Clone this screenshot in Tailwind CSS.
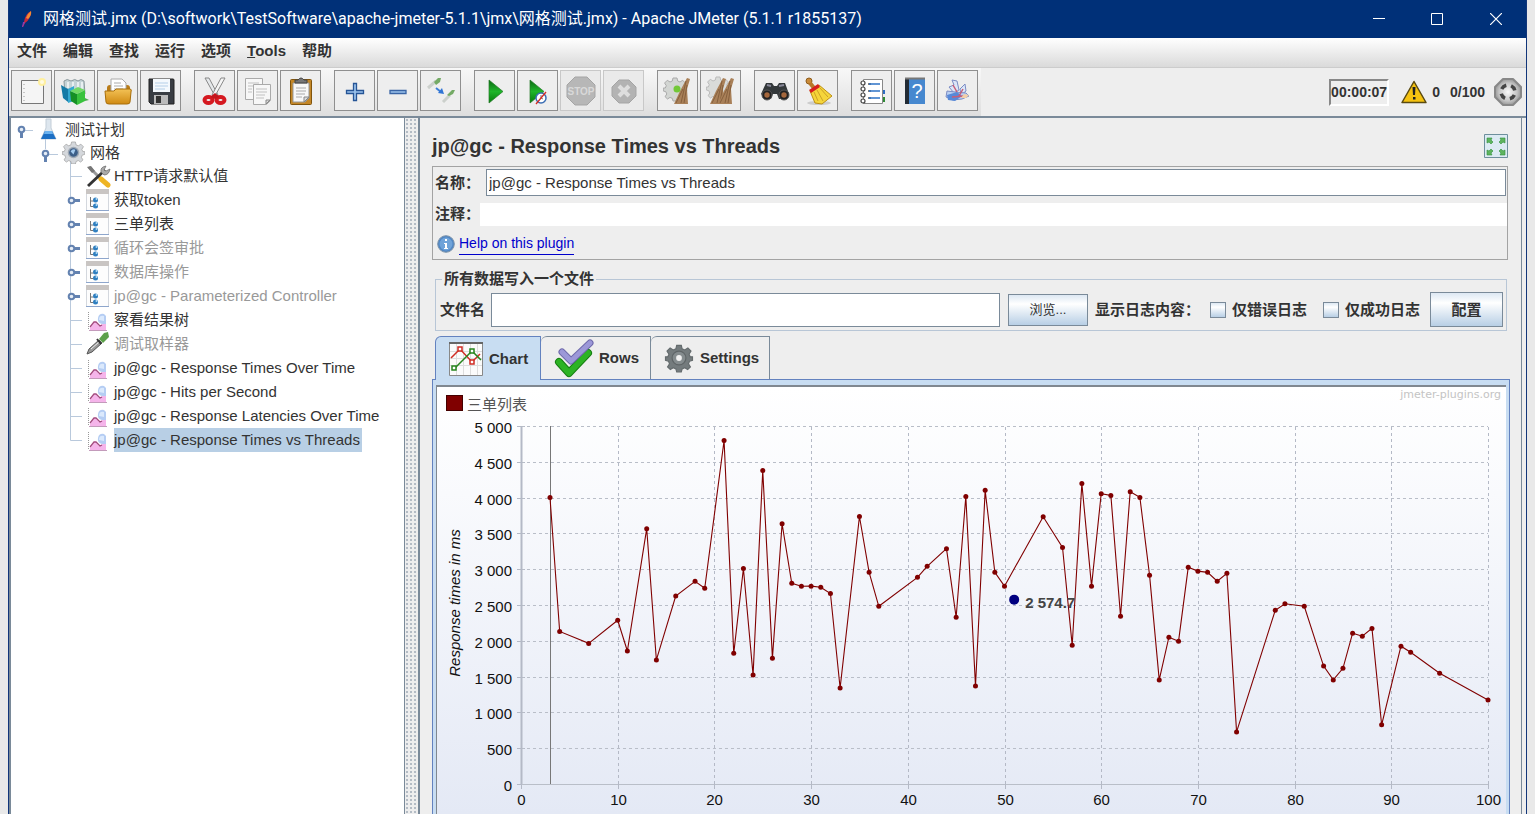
<!DOCTYPE html>
<html lang="zh-CN">
<head>
    <meta charset="UTF-8">
    <meta name="viewport" content="width=device-width, initial-scale=1.0">
    <title>网格测试.jmx - Apache JMeter (5.1.1 r1855137)</title>
    <script src="https://cdn.jsdelivr.net/npm/@tailwindcss/browser@4"></script>
</head>
<body class="h-screen overflow-hidden bg-[#e9e9e9] px-2 font-['Liberation_Sans','Noto_Sans_CJK_SC',sans-serif] text-[15px] leading-6 text-[#333]">

    <!-- Shared icons -->
    <svg class="absolute size-0" aria-hidden="true">
        <defs>
            <linearGradient id="gGreen" x1="0" y1="0" x2="0" y2="1"><stop offset="0" stop-color="#0a6a12"/><stop offset=".5" stop-color="#1fb52a"/><stop offset="1" stop-color="#067a0c"/></linearGradient>
            <linearGradient id="gChart" x1="0" y1="0" x2="0" y2="1"><stop offset="0" stop-color="#fff"/><stop offset=".25" stop-color="#f9fafd"/><stop offset="1" stop-color="#e4e9f5"/></linearGradient>
            <radialGradient id="gSteel"><stop offset="0" stop-color="#fafafa"/><stop offset=".7" stop-color="#c4c4c4"/><stop offset="1" stop-color="#999"/></radialGradient>
            <linearGradient id="gFolder" x1="0" y1="0" x2="0" y2="1"><stop offset="0" stop-color="#f3c256"/><stop offset="1" stop-color="#d08a12"/></linearGradient>
            <symbol id="keyDown" viewBox="0 0 9 14"><circle cx="4.500" cy="4.500" r="2.800" fill="#e6edf6" stroke="#6382b0" stroke-width="2"/><path d="M4.500 7v6" stroke="#6382b0" stroke-width="3"/></symbol>
            <symbol id="keyRight" viewBox="0 0 14 9"><circle cx="4.500" cy="4.500" r="2.800" fill="#e6edf6" stroke="#6382b0" stroke-width="2"/><path d="M7 4.500h6" stroke="#6382b0" stroke-width="3"/></symbol>
            <symbol id="controller" viewBox="0 0 24 24">
                <path d="M.5 1.500h22v21H.5z" fill="#fdfdfd" stroke="#d4d8de"/><path d="M0 1h23v5H0z" fill="#c9c5c3"/><path d="M0 22.500h23" stroke="#8ea6cc"/>
                <path d="M4.500 9v9.500h3M4.500 13h3" fill="none" stroke="#777"/><circle cx="9.500" cy="12" r="2.500" fill="#2f7fc0"/><circle cx="9.500" cy="18" r="2.500" fill="#2f7fc0"/><circle cx="10.500" cy="11" r="1" fill="#b5dcf5"/><circle cx="10.500" cy="17" r="1" fill="#b5dcf5"/>
            </symbol>
            <symbol id="listener" viewBox="0 0 24 24">
                <path d="M2.500 2v18" stroke="#999" stroke-dasharray="1 1"/><path d="M4 18l5-6 4 4 7-4v9H4z" fill="#f5b4ea"/><path d="M4 17l4-5 2 0 4 4 2-1" fill="none" stroke="#a3487e" stroke-width="1.300"/>
                <path d="M12 8q1-5 6-4l2 2v8h-4q-5-1-4-6z" fill="#b5cdf3"/><path d="M13 10q0-5 5-4v5" fill="#dbe9fc"/><path d="M3 20.500h18" stroke="#c39bbb"/>
            </symbol>
            <symbol id="gear" viewBox="-12 -12 24 24">
                <g fill="#d5d8dc" stroke="#9a9a9a" stroke-width=".7"><path id="cog" d="M-2-11h4l.7 3 2.300 1 2.700-1.700 2.700 2.700L8.700-3.300l1 2.300 2 0v3l-2.500.7-1 2.300L9.900 7.700 7.500 10 5 8.400l-2.300 1L2 12h-4l-.7-2.600L-5 8.400-7.500 10-9.900 7.700-8.200 5l-1-2.300-2.500-.7v-3l2 0 1-2.300L-10.400-6l2.700-2.700L-5-7l2.300-1z"/></g>
                <circle r="6" fill="#9fa9b5"/><circle r="4.500" fill="#3d5f88"/><path d="M-3-1a4 4 0 0 1 5-2L0 2z" fill="#a5cbee"/>
            </symbol>
            <symbol id="broom" viewBox="0 0 30 30"><path d="M26 2l3 1-3 10 1 15H13l6-13z" fill="#a98058"/><path d="M25 5l-5 22M26 9l-3 18M22 13l-7 14" stroke="#7c5735" stroke-width=".8"/></symbol>
        </defs>
    </svg>

    <div class="flex h-full flex-col border-x border-[#12367a] bg-[#eee]">
        <!-- Title bar -->
        <header class="flex h-[38px] shrink-0 items-center bg-[#003078] pl-3 text-white">
            <svg class="h-[18px] w-3" viewBox="0 0 12 18"><path d="M10 1q-6 3-7 11l-2 5 1 0 2-4Q10 9 10 1z" fill="#c72a3b"/><path d="M10 1q-4 3-5 7l2 1Q11 5 10 1z" fill="#f38a32"/><path d="M2 12l2 0-2 5H1z" fill="#8c3bb0"/></svg>
            <h1 class="ml-[10px] flex-1 font-['Roboto','Noto_Sans_CJK_SC',sans-serif] text-[16px] whitespace-nowrap">网格测试.jmx (D:\softwork\TestSoftware\apache-jmeter-5.1.1\jmx\网格测试.jmx) - Apache JMeter (5.1.1 r1855137)</h1>
            <button aria-label="最小化" class="flex w-[58px] justify-center"><svg class="size-3" viewBox="0 0 12 12"><path d="M0 5.500h12" stroke="#fff"/></svg></button>
            <button aria-label="最大化" class="flex w-[58px] justify-center"><svg class="size-3" viewBox="0 0 12 12"><path d="M.5.5h11v11H.5z" fill="none" stroke="#fff"/></svg></button>
            <button aria-label="关闭" class="flex w-[60px] justify-center"><svg class="size-3" viewBox="0 0 12 12"><path d="M0 0l12 12M12 0L0 12" stroke="#fff" stroke-width="1.200"/></svg></button>
        </header>

        <!-- Menu -->
        <nav class="flex h-[30px] shrink-0 items-center gap-4 border-b border-[#ccc] bg-linear-to-b from-white to-[#dadada] pb-1 pl-2 font-bold">
            <button>文件</button>
            <button>编辑</button>
            <button>查找</button>
            <button>运行</button>
            <button>选项</button>
            <button><u>T</u>ools</button>
            <button>帮助</button>
        </nav>

        <!-- Toolbar -->
        <div class="flex h-[50px] shrink-0 items-center justify-between border-b-2 border-[#7a8a99]">
            <div class="flex h-full items-start gap-[13px] bg-linear-to-b from-[#f8f8f8] to-[#dedede] pt-[2px] pr-[3px] pl-[2px]">
                <div class="flex gap-[2px]">
                    <button aria-label="新建" class="flex size-[41px] items-center justify-center border border-[#8f8f8f] bg-[#eee]">
                        <svg class="size-[30px]" viewBox="0 0 30 30"><path d="M4.500 4.500h22v23h-22z" fill="#f5f5f5" stroke="#777"/><path d="M7 8v17" stroke="#999" stroke-dasharray="1 3"/><circle cx="25" cy="6" r="4" fill="#fff0a0"/><circle cx="25" cy="6" r="2" fill="#fffbe0"/></svg>
                    </button>
                    <button aria-label="模板" class="flex size-[41px] items-center justify-center border border-[#8f8f8f] bg-[#eee]">
                        <svg class="size-[30px]" viewBox="0 0 30 30"><path d="M4 5q3-3 7 0 4-3 7 0 3-3 6 0l1 13H5z" fill="#c4d3d6" stroke="#8b999d"/><path d="M8 6v6M13 6v7M18 6v7M22 6v7" stroke="#f5f9fa" stroke-width="1.500"/><path d="M1 9l7 4v13l-5-4z" fill="#147aa6"/><path d="M8 13l6-3v15l-6 2z" fill="#35a8cf"/><path d="M10 15l7 3v11l-6-4z" fill="#169025"/><path d="M17 18l8-4v11l-8 4z" fill="#39c33d"/><path d="M10 15l8-4 7 3-8 4z" fill="#71da64"/><path d="M25 22l4 2-4 1z" fill="#4fa952"/></svg>
                    </button>
                    <button aria-label="打开" class="flex size-[41px] items-center justify-center border border-[#8f8f8f] bg-[#eee]">
                        <svg class="size-[30px]" viewBox="0 0 30 30"><path d="M4 12q0-3 3-3h17q3 0 3 3v12H4z" fill="#b97c18"/><path d="M8 3h11l4 4v12H8z" fill="#fff" stroke="#aaa"/><path d="M11 7h7M11 10h9M11 13h9" stroke="#aaa"/><path d="M2 15h9l2-2h14q2 0 1 3l-1 10q0 2-3 2H6q-3 0-3-2z" fill="url(#gFolder)" stroke="#a86e0b"/></svg>
                    </button>
                    <button aria-label="保存" class="flex size-[41px] items-center justify-center border border-[#8f8f8f] bg-[#eee]">
                        <svg class="size-[30px]" viewBox="0 0 30 30"><path d="M3 3h24q1 0 1 1v24H5l-2-2z" fill="#393d43" stroke="#222"/><path d="M7 3h17v13H7z" fill="#f4f9fd"/><path d="M9 7h13M9 10h13M9 13h10" stroke="#b4cfe8"/><path d="M8 19h14v9H8z" fill="#bbb"/><path d="M10 20h5v7h-5z" fill="#333"/></svg>
                    </button>
                </div>
                <div class="flex gap-[2px]">
                    <button aria-label="剪切" class="flex size-[41px] items-center justify-center border border-[#8f8f8f] bg-[#eee]">
                        <svg class="size-[30px]" viewBox="0 0 30 30"><path d="M5 2l4 0 9 17-3 1z" fill="#e5e8ea" stroke="#888"/><path d="M25 2l-4 0-9 17 3 1z" fill="#f5f5f5" stroke="#888"/><g fill="#eee" stroke="#d51920" stroke-width="4"><ellipse cx="8.500" cy="24" rx="4" ry="3"/><ellipse cx="20.500" cy="24" rx="4" ry="3"/></g><path d="M10 21l5-4 5 4-5 2z" fill="#c5151c"/></svg>
                    </button>
                    <button aria-label="复制" class="flex size-[41px] items-center justify-center border border-[#8f8f8f] bg-[#eee]">
                        <svg class="size-[30px]" viewBox="0 0 30 30"><g fill="#f7f7f7" stroke="#aaa"><path d="M2.500 2.500h17v21h-17z"/><path d="M10.500 8.500h17v16l-4 4h-13z"/></g><path d="M5 7h11M5 10h5M5 13h4M5 16h4M13 13h11M13 16h11M13 19h9M13 22h8" stroke="#c1c1c1"/><path d="M23 28v-4h4z" fill="#ddd" stroke="#888"/></svg>
                    </button>
                    <button aria-label="粘贴" class="flex size-[41px] items-center justify-center border border-[#8f8f8f] bg-[#eee]">
                        <svg class="size-[30px]" viewBox="0 0 30 30"><rect x="4.500" y="3.500" width="21" height="25" rx="1" fill="#c48727" stroke="#80540d"/><path d="M7 7h16v15l-4 4H7z" fill="#f8f8f8" stroke="#999"/><path d="M10 12h10M10 15h10M10 18h9M10 21h6" stroke="#aaa"/><path d="M9 7V4h3q3-4 6 0h3v3z" fill="#777" stroke="#444"/><path d="M18 26v-5h5z" fill="#ddd" stroke="#888"/></svg>
                    </button>
                </div>
                <div class="flex gap-[2px]">
                    <button aria-label="展开全部" class="flex size-[41px] items-center justify-center border border-[#8f8f8f] bg-[#eee]">
                        <svg class="size-[30px]" viewBox="0 0 30 30"><path d="M13.500 7.500h3v7h7v3h-7v7h-3v-7h-7v-3h7z" fill="#9cc3ec" stroke="#265596" stroke-width="1.300"/></svg>
                    </button>
                    <button aria-label="折叠全部" class="flex size-[41px] items-center justify-center border border-[#8f8f8f] bg-[#eee]">
                        <svg class="size-[30px]" viewBox="0 0 30 30"><path d="M7 14.500h16v3H7z" fill="#9cc3ec" stroke="#3a65a5" stroke-width="1.300"/></svg>
                    </button>
                    <button aria-label="切换" class="flex size-[41px] items-center justify-center border border-[#8f8f8f] bg-[#eee]">
                        <svg class="size-[30px]" viewBox="0 0 30 30"><path d="M2 12l8-7M17 26l7-7" stroke="#ccd0cc" stroke-width="3"/><path d="M8 6l4-4 3 0-1 4-4 3zM21 19l5-5 3 0-2 4-4 2z" fill="#74aa65"/><path d="M10 12l5 4" stroke="#3d7fd8" stroke-width="2"/><path d="M18 18l-6-1 4-5z" fill="#2f74d5"/></svg>
                    </button>
                </div>
                <div class="flex gap-[2px]">
                    <button aria-label="启动" class="flex size-[41px] items-center justify-center border border-[#8f8f8f] bg-[#eee]">
                        <svg class="size-[30px]" viewBox="0 0 30 30"><path d="M9 4l14 11.500L9 27z" fill="url(#gGreen)" stroke="#257a28" stroke-width=".7"/></svg>
                    </button>
                    <button aria-label="不停顿开始" class="flex size-[41px] items-center justify-center border border-[#8f8f8f] bg-[#eee]">
                        <svg class="size-[30px]" viewBox="0 0 30 30"><path d="M7 4l14 11.500L7 27z" fill="url(#gGreen)" stroke="#257a28" stroke-width=".7"/><circle cx="18" cy="22" r="5" fill="#fff" stroke="#3b6eb4" stroke-width="1.500"/><path d="M18 19v3l2 1" stroke="#777" fill="none"/><path d="M13 28l10-12" stroke="#d42b22" stroke-width="1.300"/></svg>
                    </button>
                    <button aria-label="停止" disabled class="flex size-[41px] items-center justify-center border border-[#c8c8c8] bg-[#eaeaea]">
                        <svg class="size-[30px]" viewBox="0 0 30 30"><path d="M9 1h12l8 8v12l-8 8H9l-8-8V9z" fill="#b7b7b7" stroke="#a5a5a5"/><text x="15" y="19" text-anchor="middle" font-size="10" font-weight="bold" fill="#d9d9d9">STOP</text></svg>
                    </button>
                    <button aria-label="关闭测试" disabled class="flex size-[41px] items-center justify-center border border-[#c8c8c8] bg-[#eaeaea]">
                        <svg class="size-[30px]" viewBox="0 0 30 30"><path d="M10 4h10l7 7v9l-7 7H10l-7-7v-9z" fill="#b3b3b3" stroke="#a5a5a5"/><path d="M10 10l10 10M20 10L10 20" stroke="#dedede" stroke-width="4"/></svg>
                    </button>
                </div>
                <div class="flex gap-[2px]">
                    <button aria-label="清除" class="flex size-[41px] items-center justify-center border border-[#8f8f8f] bg-[#eee]">
                        <svg class="size-[30px]" viewBox="0 0 30 30"><use href="#cog" transform="translate(12 13)" fill="#d2d5d2" stroke="#aaa"/><use href="#broom" x="-2" width="30" height="30"/><circle cx="14" cy="13" r="3.500" fill="#72c837"/></svg>
                    </button>
                    <button aria-label="清除全部" class="flex size-[41px] items-center justify-center border border-[#8f8f8f] bg-[#eee]">
                        <svg class="size-[30px]" viewBox="0 0 30 30"><use href="#cog" transform="translate(12 12)" fill="#d9dbd9" stroke="#bbb"/><use href="#broom" x="-9" width="30" height="30"/><use href="#broom" x="-1" width="30" height="30"/></svg>
                    </button>
                </div>
                <div class="flex gap-[2px]">
                    <button aria-label="搜索" class="flex size-[41px] items-center justify-center border border-[#8f8f8f] bg-[#eee]">
                        <svg class="size-[30px]" viewBox="0 0 30 30"><path d="M6 7h6l2 3h3l2-3h6l4 11-5 5h-5l-2-5h-4l-2 5H6l-5-5z" fill="#33383a"/><circle cx="7" cy="19" r="5" fill="#222" stroke="#555"/><circle cx="24" cy="19" r="5" fill="#222" stroke="#555"/><circle cx="7" cy="19" r="2.700" fill="#a5673c"/><circle cx="24" cy="19" r="2.700" fill="#a5673c"/><path d="M7 9l4 1M19 10l5-1" stroke="#889" stroke-width="2"/></svg>
                    </button>
                    <button aria-label="重置搜索" class="flex size-[41px] items-center justify-center border border-[#8f8f8f] bg-[#eee]">
                        <svg class="size-[30px]" viewBox="0 0 30 30"><ellipse cx="16" cy="27" rx="12" ry="2" fill="#ccc"/><circle cx="6" cy="5" r="3" fill="#c98b3a" stroke="#8f5d1c"/><path d="M7 7l4 5" stroke="#b87828" stroke-width="4"/><path d="M7 15l9-6 13 11-10 8-7-1z" fill="#f5d53a" stroke="#bd9015"/><path d="M11 16l4 9M14 14l6 11M17 12l8 9" stroke="#cda226"/><path d="M6 14l9-6 2 3-9 6z" fill="#d61e1e"/></svg>
                    </button>
                </div>
                <div class="flex gap-[2px]">
                    <button aria-label="函数助手" class="flex size-[41px] items-center justify-center border border-[#8f8f8f] bg-[#eee]">
                        <svg class="size-[30px]" viewBox="0 0 30 30"><path d="M24 14h4v4h-4z" fill="#2e6dc2"/><path d="M24 21h4v5h-4z" fill="#2f8b35"/><path d="M6.500 3.500h19v24h-19z" fill="#fff" stroke="#888"/><path d="M11 8h3M11 15h3M11 22h3" stroke="#555" stroke-width="1.500"/><path d="M12 8h11M12 15h11M12 22h11" stroke="#2e73c6" stroke-width="1.500"/><g fill="#fff" stroke="#444" stroke-width="1.200"><circle cx="6" cy="7" r="2"/><circle cx="6" cy="13" r="2"/><circle cx="6" cy="19" r="2"/><circle cx="6" cy="25" r="2"/></g></svg>
                    </button>
                    <button aria-label="帮助" class="flex size-[41px] items-center justify-center border border-[#8f8f8f] bg-[#eee]">
                        <svg class="size-[30px]" viewBox="0 0 30 30"><path d="M5 2h20v26H5z" fill="#4688cf"/><path d="M5 2h4v26H5z" fill="#222b35"/><path d="M5 2.500h20" stroke="#777" stroke-width="2"/><text x="17" y="22" text-anchor="middle" font-size="20" fill="#fff">?</text></svg>
                    </button>
                    <button aria-label="插件管理" class="flex size-[41px] items-center justify-center border border-[#8f8f8f] bg-[#eee]">
                        <svg class="size-[30px]" viewBox="0 0 30 30"><g fill="#dce6f8" stroke="#7b8cc4"><path d="M9 4l5 1 2 9-5 3-5-6 5-2z"/><path d="M17 13l5-5 1 7-5 4z"/><path d="M4 15l8 1 11 1 3 3-7 3-9 1-7-3z" fill="#b9cff2"/></g><path d="M4 19l10-3 5 4-7 5-7-1z" fill="#5789d8"/><path d="M10 9l4 7M20 13l-4 7M9 21l12-1" stroke="#c75d77" stroke-width="1.500"/><path d="M21 18l5 1-3 3-5 0z" fill="#f3cfa8"/></svg>
                    </button>
                </div>
            </div>
            <div class="flex items-center pr-1 font-bold">
                <output class="border-2 border-[#888] border-r-white border-b-white text-[14px] leading-[23px]">00:00:07</output>
                <svg class="ml-3 h-6 w-[26px]" viewBox="0 0 26 24"><path d="M13 1.500L25 22.500H1z" fill="#f5c211" stroke="#5a4a10" stroke-width="1.500" stroke-linejoin="round"/><path d="M11.500 7h3l-.5 8h-2zM12 17h2.500v2.500H12z" fill="#222"/></svg>
                <span class="ml-[5px] text-[14px]">0</span>
                <span class="ml-[10px] text-[14px]">0/100</span>
                <svg class="ml-[9px] size-7" viewBox="0 0 28 28"><path d="M9 1h10l8 8v10l-8 8H9l-8-8V9z" fill="url(#gSteel)" stroke="#888" stroke-width="2" stroke-linejoin="round"/><circle cx="14" cy="14" r="7" fill="none" stroke="#444" stroke-width="3.500" stroke-dasharray="6 5" stroke-dashoffset="-3"/></svg>
            </div>
        </div>

        <div class="flex min-h-0 flex-1">
            <!-- Test plan tree -->
            <aside class="w-[396px] shrink-0 overflow-hidden border-r border-l-2 border-[#7a8a99] bg-white whitespace-nowrap">
                <ul>
                    <li>
                        <div class="flex h-[23px] items-center">
                            <svg class="h-[23px] w-[54px]" viewBox="0 0 54 23"><path d="M14 12.500h8M34.500 20v3" stroke="#b9c9dc"/><use href="#keyDown" x="6" y="7" width="9" height="14"/><path d="M35 1h5v9l5 11H30l5-11z" fill="#dde6ee" stroke="#c3ced8"/><path d="M34 13h7l4 8H30z" fill="#1c6fc4"/><path d="M34 13h7l1 3h-9z" fill="#6bb2ef"/></svg>
                            <span>测试计划</span>
                        </div>
                        <ul>
                            <li>
                                <div class="flex h-[23px] items-center">
                                    <svg class="h-[23px] w-[79px]" viewBox="0 0 79 23"><path d="M34.500 0v8M38 13.500h9M59.500 20v3" stroke="#b9c9dc"/><use href="#keyDown" x="30" y="8" width="9" height="14"/><use href="#gear" x="51" y="0" width="23" height="23"/></svg>
                                    <span>网格</span>
                                </div>
                                <ul>
                                    <li class="flex h-6 items-center">
                                        <svg class="h-6 w-[103px]" viewBox="0 0 103 24"><path d="M59.500 0v24M60 12.500h11" stroke="#b9c9dc"/><path d="M78 3l19 19" stroke="#999" stroke-width="3"/><path d="M90 15l7 6" stroke="#eeb423" stroke-width="5" stroke-linecap="round"/><path d="M77 22L94 6" stroke="#333" stroke-width="3"/><path d="M90 8q-1-5 5-6l-2 4 2 1 4-2q-1 6-6 6z" fill="#aaa" stroke="#666" stroke-width=".7"/><path d="M76 3l4-1 4 5-3 2z" fill="#777"/></svg>
                                        <span>HTTP请求默认值</span>
                                    </li>
                                    <li class="flex h-6 items-center">
                                        <svg class="h-6 w-[103px]" viewBox="0 0 103 24"><path d="M59.500 0v24" stroke="#b9c9dc"/><use href="#keyRight" x="56" y="8" width="14" height="9"/><use href="#controller" x="75" y="0" width="24" height="24"/></svg>
                                        <span>获取token</span>
                                    </li>
                                    <li class="flex h-6 items-center">
                                        <svg class="h-6 w-[103px]" viewBox="0 0 103 24"><path d="M59.500 0v24" stroke="#b9c9dc"/><use href="#keyRight" x="56" y="8" width="14" height="9"/><use href="#controller" x="75" y="0" width="24" height="24"/></svg>
                                        <span>三单列表</span>
                                    </li>
                                    <li class="flex h-6 items-center text-[#999]">
                                        <svg class="h-6 w-[103px]" viewBox="0 0 103 24"><path d="M59.500 0v24" stroke="#b9c9dc"/><use href="#keyRight" x="56" y="8" width="14" height="9"/><use href="#controller" x="75" y="0" width="24" height="24"/></svg>
                                        <span>循环会签审批</span>
                                    </li>
                                    <li class="flex h-6 items-center text-[#999]">
                                        <svg class="h-6 w-[103px]" viewBox="0 0 103 24"><path d="M59.500 0v24" stroke="#b9c9dc"/><use href="#keyRight" x="56" y="8" width="14" height="9"/><use href="#controller" x="75" y="0" width="24" height="24"/></svg>
                                        <span>数据库操作</span>
                                    </li>
                                    <li class="flex h-6 items-center text-[#999]">
                                        <svg class="h-6 w-[103px]" viewBox="0 0 103 24"><path d="M59.500 0v24" stroke="#b9c9dc"/><use href="#keyRight" x="56" y="8" width="14" height="9"/><use href="#controller" x="75" y="0" width="24" height="24"/></svg>
                                        <span>jp@gc - Parameterized Controller</span>
                                    </li>
                                    <li class="flex h-6 items-center">
                                        <svg class="h-6 w-[103px]" viewBox="0 0 103 24"><path d="M59.500 0v24M60 12.500h11" stroke="#b9c9dc"/><use href="#listener" x="75" y="2" width="24" height="24"/></svg>
                                        <span>察看结果树</span>
                                    </li>
                                    <li class="flex h-6 items-center text-[#999]">
                                        <svg class="h-6 w-[103px]" viewBox="0 0 103 24"><path d="M59.500 0v24M60 12.500h11" stroke="#b9c9dc"/><path d="M76 22l2-5 10-9 3 3-10 9z" fill="#999" stroke="#555"/><path d="M80 17l8-7" stroke="#eee"/><path d="M86 7l4 5M90 8l4-3" stroke="#333" stroke-width="2"/><path d="M88 7l5-6 4-1 1 5-6 6z" fill="#5da14a"/></svg>
                                        <span>调试取样器</span>
                                    </li>
                                    <li class="flex h-6 items-center">
                                        <svg class="h-6 w-[103px]" viewBox="0 0 103 24"><path d="M59.500 0v24M60 12.500h11" stroke="#b9c9dc"/><use href="#listener" x="75" y="2" width="24" height="24"/></svg>
                                        <span>jp@gc - Response Times Over Time</span>
                                    </li>
                                    <li class="flex h-6 items-center">
                                        <svg class="h-6 w-[103px]" viewBox="0 0 103 24"><path d="M59.500 0v24M60 12.500h11" stroke="#b9c9dc"/><use href="#listener" x="75" y="2" width="24" height="24"/></svg>
                                        <span>jp@gc - Hits per Second</span>
                                    </li>
                                    <li class="flex h-6 items-center">
                                        <svg class="h-6 w-[103px]" viewBox="0 0 103 24"><path d="M59.500 0v24M60 12.500h11" stroke="#b9c9dc"/><use href="#listener" x="75" y="2" width="24" height="24"/></svg>
                                        <span>jp@gc - Response Latencies Over Time</span>
                                    </li>
                                    <li class="flex h-6 items-center">
                                        <svg class="h-6 w-[103px]" viewBox="0 0 103 24"><path d="M59.500 0v12.500h11.500" fill="none" stroke="#b9c9dc"/><use href="#listener" x="75" y="2" width="24" height="24"/></svg>
                                        <span class="bg-[#b8cfe5] pr-[2px]">jp@gc - Response Times vs Threads</span>
                                    </li>
                                </ul>
                            </li>
                        </ul>
                    </li>
                </ul>
            </aside>

            <!-- Splitter -->
            <div class="w-[13px] shrink-0 bg-[radial-gradient(#b4bcc5_1px,transparent_1px)] bg-size-[4px_4px]"></div>

            <!-- Listener panel -->
            <main class="mr-1 flex min-w-0 flex-1 flex-col border-r border-l-2 border-[#7a8a99] px-3 pt-[14px]">
                <div class="mb-[6px] flex h-7 items-center justify-between pr-px">
                    <h2 class="text-[20px] font-bold">jp@gc - Response Times vs Threads</h2>
                    <svg class="size-6" viewBox="0 0 24 24"><path d="M.5.5h23v23H.5z" fill="#dceaf3" stroke="#6d8f9c"/><g fill="#5eb45e" stroke="#2f8e3a" stroke-width=".6"><path d="M3 4h5l-1 2 2 2-2 2-2-2-2 1z"/><path d="M21 4h-5l1 2-2 2 2 2 2-2 2 1z"/><path d="M3 21h5l-1-2 2-2-2-2-2 2-2-1z"/><path d="M21 21h-5l1-2-2-2 2-2 2 2 2-1z"/></g></svg>
                </div>

                <section class="mr-px border border-[#a3a3a3] pt-[2px] pb-1 whitespace-nowrap">
                    <div class="flex items-center">
                        <label for="name" class="w-[53px] pl-[2px] font-bold">名称：</label>
                        <input id="name" type="text" value="jp@gc - Response Times vs Threads" class="mr-px h-[27px] min-w-0 flex-1 border border-[#7a8a99] bg-white px-[2px]">
                    </div>
                    <div class="mt-[6px] flex items-center">
                        <label for="comment" class="w-[47px] pl-[2px] font-bold">注释：</label>
                        <input id="comment" type="text" class="h-[23px] min-w-0 flex-1 bg-white px-[2px]">
                    </div>
                    <div class="mt-[6px] flex items-center pl-1">
                        <svg class="mr-1 size-[18px]" viewBox="0 0 18 18"><circle cx="9" cy="9" r="8.300" fill="#4f86c4" stroke="#7d93aa"/><circle cx="9" cy="9" r="6.500" fill="#6fa3d9"/><path d="M7 8h3v5h1v1H7v-1h1V9H7zM8 4h2v2H8z" fill="#fff"/></svg>
                        <a href="#help" class="border-b border-[#0000cc] text-[14px] leading-[22px] text-[#0000cc]">Help on this plugin</a>
                    </div>
                </section>

                <fieldset class="mt-[11px] mr-[2px] ml-[3px] min-w-0 border border-[#b8c6d6] pt-[5px] pr-[3px] pb-[3px] pl-1">
                    <legend class="ml-[2px] px-[2px] leading-4 font-bold">所有数据写入一个文件</legend>
                    <div class="flex items-center font-bold whitespace-nowrap">
                        <label for="file">文件名</label>
                        <input id="file" type="text" class="ml-[6px] h-[34px] min-w-0 flex-1 border border-[#7a8a99] bg-white px-[2px]">
                        <button class="ml-2 h-8 w-20 border border-[#7a8a99] bg-linear-to-b from-[#dde8f3] via-white via-30% to-[#b8cfe5] text-[13px] font-normal">浏览...</button>
                        <span class="ml-[7px] w-[108px]">显示日志内容：</span>
                        <label class="ml-[7px] flex items-center gap-[6px]"><input type="checkbox" class="size-4 appearance-none border border-[#7a8a99] bg-linear-to-b from-[#dde8f3] via-white via-30% to-[#b8cfe5]">仅错误日志</label>
                        <label class="ml-4 flex items-center gap-[6px]"><input type="checkbox" class="size-4 appearance-none border border-[#7a8a99] bg-linear-to-b from-[#dde8f3] via-white via-30% to-[#b8cfe5]">仅成功日志</label>
                        <button class="ml-[10px] h-[35px] w-[73px] border border-[#7a8a99] bg-linear-to-b from-[#dde8f3] via-white via-30% to-[#b8cfe5]">配置</button>
                    </div>
                </fieldset>

                <!-- Tabs -->
                <div class="mt-[5px] flex h-[43px] shrink-0 pl-[3px] font-bold" role="tablist">
                    <button role="tab" aria-selected="true" class="z-10 -mb-px flex w-[106px] items-center gap-[5px] rounded-tl-[6px] border border-b-0 border-[#6382bf] bg-[#c8ddf2] pl-3">
                        <svg class="size-9" viewBox="0 0 36 36"><path d="M1.500 1.500h33v33h-33z" fill="#fbfbfb" stroke="#888"/><path d="M1 2h34" stroke="#666" stroke-width="2"/><path d="M8.500 3v31M15.500 3v31M22.500 3v31M29.500 3v31M2 10.500h32M2 17.500h32M2 24.500h32" stroke="#ddd"/><path d="M3 17l9-9 12 13 8-8" fill="none" stroke="#d02d24" stroke-width="1.500"/><path d="M6 28L24 10l9 9" fill="none" stroke="#27851e" stroke-width="1.500"/><path d="M10 6h4v4h-4zM22 19h4v4h-4z" fill="#fff" stroke="#d02d24" stroke-width="1.500"/><path d="M4 25h4v4H4zM22 8h4v4h-4z" fill="#fff" stroke="#27851e" stroke-width="1.500"/></svg>
                        Chart
                    </button>
                    <button role="tab" aria-selected="false" class="flex w-[110px] items-center gap-[5px] rounded-tl-[6px] border border-b-0 border-l-0 border-[#7a8a99] pl-[13px]">
                        <svg class="size-10" viewBox="0 0 40 40"><g fill="none" stroke-linejoin="round" stroke-linecap="round"><path d="M5 24l10 11 19-20" stroke="#167e12" stroke-width="8"/><path d="M5 24l10 11 19-20" stroke="#2db324" stroke-width="6"/><path d="M8 14l9 9L36 5" stroke="#6f6aac" stroke-width="7"/><path d="M8 14l9 9L36 5" stroke="#9c98d8" stroke-width="5"/></g></svg>
                        Rows
                    </button>
                    <button role="tab" aria-selected="false" class="flex w-[119px] items-center gap-[6px] rounded-tl-[6px] border border-b-0 border-l-0 border-[#7a8a99] pl-[13px]">
                        <svg class="size-[30px]" viewBox="-13 -13 26 26"><use href="#cog" fill="#747b7d" stroke="#646b6d"/><circle r="6" fill="#858c8e" stroke="#5f6567"/><circle r="2.500" fill="#f1f1f1"/></svg>
                        Settings
                    </button>
                </div>
                <div class="-mr-px flex min-h-0 flex-1 border border-b-0 border-[#6382bf] bg-[#c8ddf2] pt-[5px] pr-[3px] pl-[3px]">
                    <div class="min-w-0 flex-1 border-t-2 border-l border-[#808890]">
                        <svg id="chart" class="block size-full" role="img" aria-label="Response Times vs Threads"></svg>
                    </div>
                </div>
            </main>
        </div>
    </div>

    <script>
        // [active threads, response time in ms]
        const points = [
            [3, 4000], [4, 2131], [7, 1964], [10, 2287], [11, 1858], [13, 3566], [14, 1733], [16, 2624], [18, 2830], [19, 2733],
            [21, 4797], [22, 1825], [23, 3009], [24, 1521], [25, 4379], [26, 1758], [27, 3634], [28, 2803], [29, 2761], [30, 2763],
            [31, 2747], [32, 2660], [33, 1340], [35, 3736], [36, 2956], [37, 2482], [41, 2886], [42, 3040], [44, 3287], [45, 2329],
            [46, 4015], [47, 1368], [48, 4101], [49, 2956], [50, 2763], [54, 3733], [56, 3304], [57, 1939], [58, 4196], [59, 2763],
            [60, 4054], [61, 4031], [62, 2343], [63, 4082], [64, 4003], [65, 2917], [66, 1454], [67, 2050], [68, 1995], [69, 3026],
            [70, 2973], [71, 2956], [72, 2833], [73, 2942], [74, 727], [78, 2427], [79, 2517], [81, 2482], [83, 1647], [84, 1454],
            [85, 1616], [86, 2106], [87, 2064], [88, 2173], [89, 827], [91, 1925], [92, 1839], [95, 1546], [100, 1173]
        ];
        const margin = { top: 39, right: 18, bottom: 30, left: 84 };
        const chart = document.getElementById('chart');

        function drawChart() {
            const w = chart.clientWidth;
            const h = chart.clientHeight;
            const x = v => margin.left + v / 100 * (w - margin.left - margin.right);
            const y = v => h - margin.bottom - v / 5000 * (h - margin.top - margin.bottom);
            const crisp = v => Math.round(v) + 0.5;
            let out = '<rect width="100%" height="100%" fill="url(#gChart)"/>';

            // Grid and axis labels
            for (let v = 0; v <= 5000; v += 500) {
                const gy = crisp(y(v));
                const label = v < 1000 ? v : Math.floor(v / 1000) + ' ' + String(v % 1000).padStart(3, '0');
                out += `<path d="M${x(0) - 4} ${gy}h8" stroke="#b4b9c6"/>`;
                out += `<path d="M${x(0)} ${gy}H${x(100)}" stroke="#b9bec8" ${v ? 'stroke-dasharray="3 3"' : ''}/>`;
                out += `<text x="${x(0) - 9}" y="${gy + 6}" text-anchor="end" fill="#111">${label}</text>`;
            }
            for (let v = 0; v <= 100; v += 10) {
                const gx = crisp(x(v));
                out += `<path d="M${gx} ${y(0)}V${y(5000)}" stroke="#b4b9c6" ${v ? 'stroke-dasharray="3 3"' : 'stroke-width="2"'}/>`;
                out += `<path d="M${gx} ${y(0)}v5" stroke="#b4b9c6"/>`;
                out += `<text x="${gx}" y="${y(0) + 21}" text-anchor="middle" fill="#111">${v}</text>`;
            }
            out += `<text transform="translate(23 ${(y(0) + y(5000)) / 2 - 2}) rotate(-90)" text-anchor="middle" font-style="italic" fill="#111">Response times in ms</text>`;
            out += `<path d="M${crisp(x(3))} ${y(0)}V${y(5000)}" stroke="#777"/>`;

            // Series
            out += `<polyline points="${points.map(p => x(p[0]) + ',' + y(p[1])).join(' ')}" fill="none" stroke="#800000" stroke-width="1.100"/>`;
            out += points.map(p => `<circle cx="${x(p[0])}" cy="${y(p[1])}" r="2.500" fill="#800000"/>`).join('');

            // Value marker
            out += `<circle cx="${x(51)}" cy="${y(2574.7)}" r="5" fill="#000080"/>`;
            out += `<text x="${x(51) + 11}" y="${y(2574.7) + 8}" font-weight="bold" fill="#444">2 574.7</text>`;

            // Legend and credit
            out += '<rect x="9.500" y="8.500" width="16" height="15" fill="#800000" stroke="#400"/>';
            out += '<text x="30" y="23" fill="#555">三单列表</text>';
            out += `<text x="${w - 5}" y="11" text-anchor="end" font-family="DejaVu Sans" font-size="11" fill="#c4c4c4">jmeter-plugins.org</text>`;
            chart.innerHTML = out;
        }

        new ResizeObserver(drawChart).observe(chart);
    </script>
</body>
</html>
